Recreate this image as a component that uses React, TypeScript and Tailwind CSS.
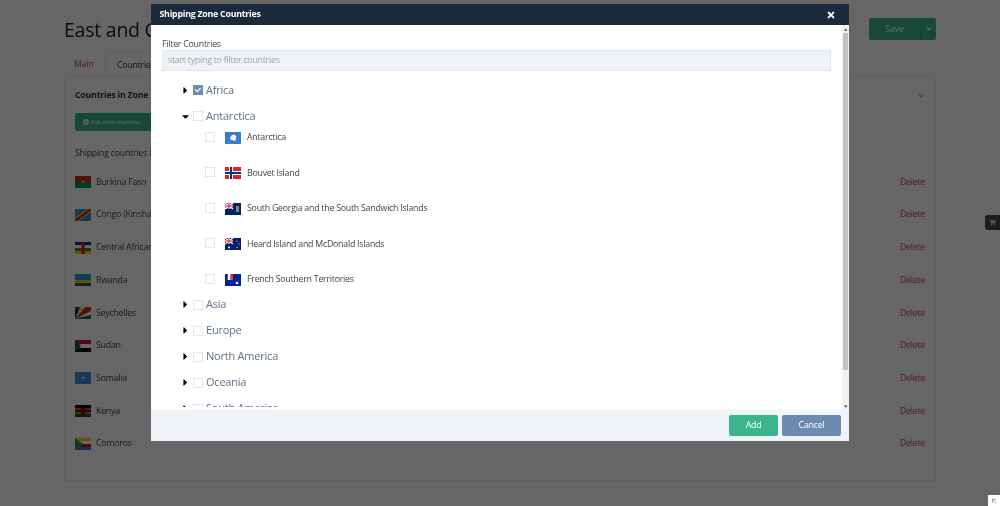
import React from "react";
import { FaTimes, FaCaretRight, FaCaretDown, FaPlusCircle, FaAngleDown, FaShoppingCart, FaCheck } from "react-icons/fa";
import { ArrowUpLeft } from "lucide-react";

function Flag({ id }: { id: string }) {
  const map: Record<string, React.ReactNode> = {
    bf: <><rect width="16" height="6" fill="#d9261c" /><rect y="6" width="16" height="6" fill="#009a3d" /><polygon points="8,3.5 9,7 6,5 10,5 7,7" fill="#fcd116" /></>,
    cd: <><rect width="16" height="12" fill="#2a8fd8" /><polygon points="0,12 0,9 12,0 16,0 16,3 4,12" fill="#f7d618" /><polygon points="0,12 0,10.5 14,0 16,0 16,1.5 2,12" fill="#ce1021" /><polygon points="2.5,1 3.2,3 1.2,2 3.8,2 1.8,3" fill="#f7d618" /></>,
    cf: <><rect width="16" height="3" fill="#003082" /><rect y="3" width="16" height="3" fill="#fff" /><rect y="6" width="16" height="3" fill="#289728" /><rect y="9" width="16" height="3" fill="#ffce00" /><rect x="6.5" width="3" height="12" fill="#d21034" /></>,
    rw: <><rect width="16" height="6" fill="#20a0d8" /><rect y="6" width="16" height="3" fill="#fad201" /><rect y="9" width="16" height="3" fill="#20603d" /></>,
    sc: <><rect width="16" height="12" fill="#003f87" /><polygon points="0,12 5,0 11,0" fill="#fcd856" /><polygon points="0,12 11,0 16,0 16,4" fill="#d62828" /><polygon points="0,12 16,4 16,8" fill="#fff" /><polygon points="0,12 16,8 16,12" fill="#007a3d" /></>,
    sd: <><rect width="16" height="4" fill="#d21034" /><rect y="4" width="16" height="4" fill="#fff" /><rect y="8" width="16" height="4" fill="#000" /><polygon points="0,0 6,6 0,12" fill="#007229" /></>,
    so: <><rect width="16" height="12" fill="#4189dd" /><polygon points="8,3.5 9,7.5 6,5 10,5 7,7.5" fill="#fff" /></>,
    ke: <><rect width="16" height="4" fill="#000" /><rect y="4" width="16" height="4" fill="#bb0000" /><rect y="8" width="16" height="4" fill="#006600" /><rect y="3.6" width="16" height=".7" fill="#fff" /><rect y="7.7" width="16" height=".7" fill="#fff" /><ellipse cx="8" cy="6" rx="2" ry="3.6" fill="#bb0000" stroke="#000" strokeWidth=".5" /></>,
    km: <><rect width="16" height="3" fill="#ffc61e" /><rect y="3" width="16" height="3" fill="#fff" /><rect y="6" width="16" height="3" fill="#ce1126" /><rect y="9" width="16" height="3" fill="#3a75c4" /><polygon points="0,0 8,6 0,12" fill="#3d8e33" /></>,
    aq: <><rect width="16" height="12" fill="#3a7dce" /><path d="M5 6.500L6 4l2-1.500L10 3l1.500 2-1 1.500L11 8 9 9 7.500 8 6 8z" fill="#fff" /></>,
    bv: <><rect width="16" height="12" fill="#d72828" /><rect x="4" width="4" height="12" fill="#fff" /><rect y="4" width="16" height="4" fill="#fff" /><rect x="5" width="2" height="12" fill="#003680" /><rect y="5" width="16" height="2" fill="#003680" /></>,
    gs: <><rect width="16" height="12" fill="#012169" /><rect width="8" height="6" fill="#5a6a9a" /><path d="M0 0l8 6M8 0L0 6" stroke="#fff" strokeWidth="1.300" /><rect y="2" width="8" height="2" fill="#fff" /><rect x="3" width="2" height="6" fill="#fff" /><rect x="3.500" width="1" height="6" fill="#c8102e" /><rect y="2.500" width="8" height="1" fill="#c8102e" /><rect x="11" y="3" width="3" height="6" fill="#7d8a6a" /></>,
    hm: <><rect width="16" height="12" fill="#012169" /><path d="M0 0l8 6M8 0L0 6" stroke="#fff" strokeWidth="1.300" /><rect x="3" width="2" height="6" fill="#fff" /><rect y="2" width="8" height="2" fill="#fff" /><rect x="3.500" width="1" height="6" fill="#c8102e" /><rect y="2.500" width="8" height="1" fill="#c8102e" /><circle cx="4" cy="9.500" r="1" fill="#fff" /><circle cx="12" cy="3" r=".6" fill="#fff" /><circle cx="14" cy="6" r=".6" fill="#fff" /><circle cx="12" cy="9.500" r=".6" fill="#fff" /></>,
    tf: <><rect width="16" height="12" fill="#002395" /><rect width="8" height="6" fill="#fff" /><rect width="2.700" height="6" fill="#002395" /><rect x="5.300" width="2.700" height="6" fill="#ed2939" /><circle cx="12" cy="9" r="1.300" fill="#fff" /></>,
  };
  return <svg viewBox="0 0 16 12" className="w-4 h-3 shrink-0 block">{map[id]}</svg>;
}

const zoneCountries = [
  ["bf", "Burkina Faso"],
  ["cd", "Congo (Kinshasa)"],
  ["cf", "Central African Republic"],
  ["rw", "Rwanda"],
  ["sc", "Seychelles"],
  ["sd", "Sudan"],
  ["so", "Somalia"],
  ["ke", "Kenya"],
  ["km", "Comoros"],
];

const antarctic = [
  ["aq", "Antarctica"],
  ["bv", "Bouvet Island"],
  ["gs", "South Georgia and the South Sandwich Islands"],
  ["hm", "Heard Island and McDonald Islands"],
  ["tf", "French Southern Territories"],
];

function Box({ checked }: { checked?: boolean }) {
  return (
    <span className={"w-[10px] h-[10px] shrink-0 flex items-center justify-center border " + (checked ? "bg-[#6d8fb3] border-[#6d8fb3]" : "bg-white border-[#e3e6ea]")}>
      {checked && <FaCheck className="text-white text-[6px]" />}
    </span>
  );
}

function Region({ name, open, checked }: { name: string; open?: boolean; checked?: boolean }) {
  return (
    <div className="h-[26px] flex items-center pl-[18px] shrink-0">
      <span className="w-[13px] flex justify-start text-black text-[11px]">
        {open ? <FaCaretDown /> : <FaCaretRight />}
      </span>
      <span className="w-[13px] flex"><Box checked={checked} /></span>
      <span className="text-[11px] tracking-[-0.02em] text-[#5f7285]">{name}</span>
    </div>
  );
}

export default function App() {
  return (
    <div className="relative h-[506px] w-[1000px] overflow-hidden bg-white font-['Open_Sans',sans-serif] tracking-[-0.015em] blur-[0.3px]">
      <div className="px-[64px] pt-[18px]">
        <div className="flex items-start justify-between h-[34px]">
          <h1 className="text-[19.500px] leading-[24px] text-[#222]">East and Central Africa</h1>
          <div className="flex h-[22px] rounded-[2px] overflow-hidden bg-[#3cb58f] text-white text-[9px]">
            <span className="w-[52px] flex items-center justify-center border-r border-[#36a583]">Save</span>
            <span className="w-[15px] flex items-center justify-center"><FaAngleDown className="text-[8px]" /></span>
          </div>
        </div>
        <div className="flex text-[8.800px] h-[24px] items-stretch">
          <span className="text-[#d9386a] w-[41px] pl-[10px] pt-[2px] flex items-center">Main</span>
          <span className="text-[#333] w-[70px] pl-[11px] pt-[2px] flex items-center border border-b-0 border-[#ededed]">Countries</span>
        </div>
        <div className="h-[405px] border border-[#ededed] px-[10px] pt-[13px]">
          <div className="flex justify-between items-center h-[12px]">
            <b className="text-[8.800px] text-[#333]">Countries in Zone East and Central Africa</b>
            <FaAngleDown className="text-[8px] text-[#aaa]" />
          </div>
          <div className="mt-[11px] w-[90px] h-[18px] rounded-[2px] bg-[#3cb58f] text-white text-[6px] flex items-center gap-[2px] pl-[8px]">
            <FaPlusCircle /> Edit zone countries
          </div>
          <div className="mt-[16px] text-[8.800px] text-[#444] h-[14px]">Shipping countries for this zone</div>
          <div className="mt-[5px] flex flex-col">
            {zoneCountries.map(([id, n]) => (
              <div key={id} className="h-[32.700px] flex items-center text-[8.800px]">
                <Flag id={id} />
                <span className="ml-[5px] text-[#444]">{n}</span>
                <span className="ml-auto text-[#d9386a]">Delete</span>
              </div>
            ))}
          </div>
        </div>
      </div>

      <div className="absolute right-0 top-[215px] w-[15px] h-[15px] rounded-l-[3px] bg-[#46464f] text-[#ccc] flex items-center justify-center text-[7px]">
        <FaShoppingCart />
      </div>

      <div className="absolute inset-0 bg-black/60" />

      <div className="absolute right-0 bottom-0 w-[12px] h-[11px] bg-white text-[#777] flex items-center justify-center">
        <ArrowUpLeft size={8} />
      </div>

      <div className="absolute left-[151px] top-[4px] w-[698px] h-[437px] flex flex-col bg-white">
        <div className="h-[21px] bg-[#1b2a3b] flex items-center justify-between pl-[8.500px] pr-[13px] pt-[1px] text-white shrink-0">
          <b className="text-[8.800px]">Shipping Zone Countries</b>
          <FaTimes className="text-[10px]" />
        </div>
        <div className="flex-1 flex min-h-0">
          <div className="flex-1 min-w-0 overflow-hidden px-[11px] pt-[14px]">
            <div className="text-[8.800px] leading-[11px] text-[#444]">Filter Countries</div>
            <div className="h-[21px] bg-[#eff2f7] border border-[#e2e6ec] flex items-center pl-[5px] pt-[1px] text-[8.800px] text-[#9aa3ad]">
              start typing to filter countries
            </div>
            <div className="mt-[6px] h-[330px] overflow-hidden flex flex-col">
              <Region name="Africa" checked />
              <Region name="Antarctica" open />
              <div className="flex flex-col gap-[19.400px] mt-[1px] mb-[4px]">
                {antarctic.map(([id, n]) => (
                  <div key={id} className="h-[16px] flex items-center pl-[43px] shrink-0">
                    <span className="-mt-[2px]"><Box /></span>
                    <span className="ml-[10px]"><Flag id={id} /></span>
                    <span className="ml-[6px] text-[8.800px] text-[#444]">{n}</span>
                  </div>
                ))}
              </div>
              <Region name="Asia" />
              <Region name="Europe" />
              <Region name="North America" />
              <Region name="Oceania" />
              <Region name="South America" />
            </div>
          </div>
          <div className="w-[7px] bg-[#f1f1f1] flex flex-col items-center shrink-0">
            <span className="h-[8px] text-[5px] leading-[8px] text-[#555]">▲</span>
            <span className="w-[5px] h-[337px] bg-[#c1c1c1]" />
            <span className="mt-auto h-[8px] text-[5px] leading-[8px] text-[#555]">▼</span>
          </div>
        </div>
        <div className="h-[31px] bg-[#f0f3f7] flex items-center justify-end gap-[4px] pr-[8px] shrink-0 text-[8.800px] text-white">
          <span className="w-[49px] h-[21px] rounded-[2px] bg-[#3cb58f] flex items-center justify-center">Add</span>
          <span className="w-[59px] h-[21px] rounded-[2px] bg-[#6b8cb0] flex items-center justify-center">Cancel</span>
        </div>
      </div>
    </div>
  );
}
